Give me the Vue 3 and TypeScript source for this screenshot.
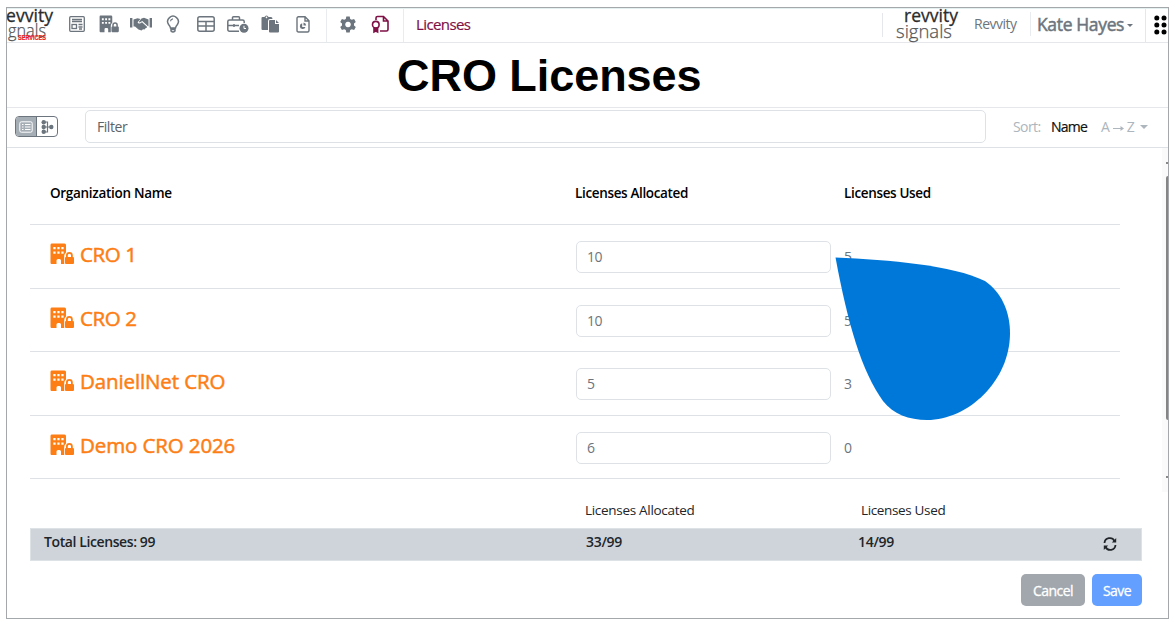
<script setup lang="ts">
import { ref } from 'vue'

interface Org {
  name: string
  allocated: number
  used: number
  cls: string
}

const orgs = ref<Org[]>([
  { name: 'CRO 1', allocated: 10, used: 5, cls: 'n1' },
  { name: 'CRO 2', allocated: 10, used: 5, cls: 'n1' },
  { name: 'DaniellNet CRO', allocated: 5, used: 3, cls: 'n2' },
  { name: 'Demo CRO 2026', allocated: 6, used: 0, cls: 'n2' },
])
</script>

<template>
  <div class="page">
    <svg class="defs" width="0" height="0">
      <defs>
        <symbol id="building" viewBox="0 0 24 22">
          <path fill-rule="evenodd" d="M1.5 0.5H14.5Q16 0.5 16 2V9.5Q14.3 10.8 14.2 13V21H11V17.5Q11 16 9.5 16H8Q6.500 16 6.500 17.500V21H1.500Q.5 21 .5 19.500V2Q.5 .5 1.500 .5ZM3.300 4V6.300H5.600V4ZM7.300 4V6.300H9.600V4ZM11.300 4V6.300H13.600V4ZM3.300 8.500V10.800H5.600V8.500ZM7.300 8.500V10.800H9.600V8.500ZM11.300 8.500V10.800H13.600V8.500Z" />
          <path fill-rule="evenodd" d="M16 14V12.300A3.400 3.400 0 0 1 22.800 12.300V14H23Q24 14 24 15V20Q24 21 23 21H16Q15 21 15 20V15Q15 14 16 14ZM17.800 14H21V12.300A1.600 1.600 0 0 0 17.800 12.300Z" />
        </symbol>
      </defs>
    </svg>
    <div class="frame">
      <header class="top">
        <svg class="logo-left" width="48" height="34" viewBox="0 0 48 34">
          <text x="-1" y="14" class="lg-dark" textLength="47" lengthAdjust="spacingAndGlyphs">evvity</text>
          <text x="1" y="28.500" class="lg-light" textLength="38" lengthAdjust="spacingAndGlyphs">gnals</text>
          <text x="11" y="32" class="lg-red" textLength="28" lengthAdjust="spacingAndGlyphs">SERVICES</text>
        </svg>
        <nav class="icons main-icons">
          <span><svg width="16" height="16" viewBox="0 0 16 16" fill="none" stroke="currentColor" stroke-width="1.300"><rect x=".7" y=".7" width="14.600" height="14.600" rx="1" /><path d="M3 3.500H13M3 5.500H13M9.500 8.500H13.500M9.500 11H13.500M10 13H13" /><rect x="3" y="8.500" width="4.500" height="4" /></svg></span>
          <span><svg width="20" height="18" fill="currentColor"><use href="#building" /></svg></span>
          <span><svg width="22" height="14" viewBox="0 0 22 14" fill="currentColor"><path d="M0 1H2.400V10.500H0ZM19.600 1H22V10.500H19.600Z" /><path d="M3.500 2.500L7.500 1.200 10.500 2 7.600 5.200Q8.200 7.400 10.500 6.200L12 5.200 17 9.700Q17.300 11 15.800 11L14.500 12.500 13 12.200 11.500 13.500 8.500 12.500 5 9.500H3.500ZM11.500 1.500L14 .8 18.500 2.500V9.200H18L12.300 3.900 9.800 5.400 8.800 5.100Z" /></svg></span>
          <span><svg width="14" height="18" viewBox="0 0 14 18" fill="none" stroke="currentColor" stroke-width="1.500"><path d="M4.500 13Q4.400 11.700 2.600 9.500A5.300 5.300 0 1 1 11.400 9.500Q9.600 11.700 9.500 13ZM5 14.500V16Q7 18 9 16V14.500Z" /><path d="M4.500 6.200Q4.700 4.200 7 3.900" stroke-width="1.200" /></svg></span>
          <span><svg width="18" height="16" viewBox="0 0 18 16" fill="none" stroke="currentColor" stroke-width="1.500"><rect x=".8" y=".8" width="16.400" height="14.400" rx="2" /><path d="M1 5.500H17M1 10H17M9 5.500V15" /></svg></span>
          <span><svg width="22" height="17" viewBox="0 0 22 17" fill="none" stroke="currentColor" stroke-width="1.500"><path d="M12 15.200H2.500Q.8 15.200 .8 13.500V5.500Q.8 4 2.500 4H15.500Q17.200 4 17.200 5.500V7M5.500 4V1.800Q5.500.8 6.500.8H11.500Q12.500.8 12.500 1.800V4M1 9.500H12M7 8V11" /><circle cx="17" cy="12.300" r="4.500" fill="currentColor" stroke="none" /><path d="M17 9.800V12.500H19" stroke="#fff" stroke-width="1" /></svg></span>
          <span><svg width="19" height="18" viewBox="0 0 19 18" fill="currentColor"><path fill-rule="evenodd" d="M1.500 2H3.500Q4 .5 5.500.5T7.500 2H10Q11.500 2 11.500 4H9Q7 4 7 6V15H1.500Q.5 15 .5 14V3Q.5 2 1.500 2ZM5.500 1.500A.8.8 0 1 0 5.510 1.500Z" /><path d="M9 5H14V9H18V16.500Q18 17.500 17 17.500H9Q8 17.500 8 16.500V6Q8 5 9 5ZM15 5L18 8H15Z" /></svg></span>
          <span><svg width="14" height="17" viewBox="0 0 14 17" fill="none" stroke="currentColor" stroke-width="1.400"><path d="M2 .8H9L13 4.800V14.500Q13 16 11.500 16H2.500Q1 16 1 14.500V2.200Q1 .8 2.500.8M9 1V5H13" /><path d="M6.200 7.300A2.900 2.900 0 1 0 9.500 11H6.200Z" fill="currentColor" stroke="none" /><path d="M7.500 6.500V9.500H10.200Q10 6.800 7.500 6.500Z" fill="currentColor" stroke="none" /></svg></span>
        </nav>
        <nav class="icons admin-icons">
          <span><svg width="16" height="17" viewBox="0 0 16 17" fill="currentColor"><path fill-rule="evenodd" d="M6.300.5H9.700L10.200 2.900 11.800 3.800 14.100 3 15.800 6 14 7.600V9.400L15.800 11 14.100 14 11.800 13.200 10.200 14.100 9.700 16.500H6.300L5.800 14.100 4.200 13.200 1.900 14 .2 11 2 9.400V7.600L.2 6 1.900 3 4.200 3.800 5.800 2.900ZM8 5.700A2.800 2.800 0 1 0 8.010 5.700Z" /></svg></span>
          <span class="active"><svg width="18" height="19" viewBox="0 0 18 19" fill="none" stroke="currentColor" stroke-width="1.600"><path d="M5 5V3Q5 1.500 6.500 1.500H12.500L17 6V14.500Q17 16 15.500 16H9M12.500 1.500V6H17" /><circle cx="4.800" cy="9.700" r="3.300" /><path d="M3 12.500V17L4.800 16 6.600 17V12.500" fill="currentColor" /></svg></span>
        </nav>
        <span class="crumb">Licenses</span>
        <div class="account">
          <div class="brand">
            <svg width="65" height="35" viewBox="0 0 65 35">
              <text x="8" y="14" class="lg-dark" textLength="54" lengthAdjust="spacingAndGlyphs">revvity</text>
              <text x="0" y="29.500" class="lg-light" textLength="56" lengthAdjust="spacingAndGlyphs">signals</text>
            </svg>
          </div>
          <span class="tenant">Revvity</span>
          <div class="user"><span class="uname">Kate Hayes</span><i class="caret"></i></div>
          <div class="grid-menu">
            <svg width="13" height="20" viewBox="0 0 13 20"><g fill="#000"><circle cx="2.800" cy="3" r="2.500" /><circle cx="10" cy="3" r="2.500" /><circle cx="2.800" cy="10" r="2.500" /><circle cx="10" cy="10" r="2.500" /><circle cx="2.800" cy="17" r="2.500" /><circle cx="10" cy="17" r="2.500" /></g></svg>
          </div>
        </div>
      </header>

      <h1 class="title"><span>CRO Licenses</span></h1>

      <div class="toolbar">
        <div class="toggle">
          <span class="on"><svg width="14" height="12" viewBox="0 0 14 12" fill="none" stroke="#fff"><rect x=".8" y=".8" width="12.400" height="10.400" rx="1.500" /><path d="M3 3.500H4.500M6 3.500H11.500M3 6H4.500M6 6H11.500M3 8.500H4.500M6 8.500H11.500" /></svg></span>
          <span><svg width="13" height="14" viewBox="0 0 13 14" fill="#6c757d"><circle cx="2.700" cy="2.300" r="2.200" /><circle cx="2.700" cy="7" r="2.200" /><circle cx="2.700" cy="11.700" r="2.200" /><circle cx="10.300" cy="7" r="2.200" /><path d="M3 2H6.500V12H3M3 7H10" fill="none" stroke="#6c757d" stroke-width="1.200" /></svg></span>
        </div>
        <div class="filter">Filter</div>
        <span class="sort">Sort:</span>
        <span class="sort-name">Name</span>
        <span class="sort-dir">A <svg width="11" height="7" viewBox="0 0 11 7"><path d="M0 3.500H9" stroke="currentColor" /><path d="M7.500 1L11 3.500 7.500 6Z" fill="currentColor" /></svg> Z</span>
        <i class="caret pale"></i>
      </div>

      <main class="scroll-area">
        <section class="table">
          <div class="row head">
            <span class="h-org">Organization Name</span>
            <span class="h-al">Licenses Allocated</span>
            <span class="h-us">Licenses Used</span>
          </div>
          <div v-for="org in orgs" :key="org.name" class="row">
            <div class="org">
              <svg width="24" height="22" fill="#fd7e14"><use href="#building" /></svg>
              <span :class="org.cls">{{ org.name }}</span>
            </div>
            <div class="input">{{ org.allocated }}</div>
            <span class="used">{{ org.used }}</span>
          </div>
        </section>
        <div class="scrollbar"><i class="tick"></i><b class="thumb"></b><i class="tick low"></i></div>
      </main>

      <footer class="summary">
        <div class="labels"><span></span><span class="l-al">Licenses Allocated</span><span class="l-us">Licenses Used</span></div>
        <div class="total">
          <span class="t1">Total Licenses: 99</span><span class="t2">33/99</span><span class="t3">14/99</span>
          <svg width="14" height="14" viewBox="0 0 14 14" fill="none" stroke="#212529" stroke-width="1.800"><path d="M1.500 6A5.300 5.300 0 0 1 11.500 4M12.500 8A5.300 5.300 0 0 1 2.500 10" /><path d="M13.200 1V5.500H8.800ZM.8 13V8.500H5.200Z" fill="#212529" stroke="none" /></svg>
        </div>
        <div class="actions">
          <button class="cancel"><span>Cancel</span></button>
          <button class="save"><span>Save</span></button>
        </div>
      </footer>
    </div>
    <svg class="drop" width="176" height="164" viewBox="835 257 176 164">
      <path fill="#0078d9" d="M835.500 257.500C890 260 952 265 985 281C1001 292 1010 311 1010 333C1010 381 968 420 927 420C909 420 893 414 883 401C862 372 848 325 835.500 257.500Z" />
    </svg>
  </div>
</template>

<style>
body { margin: 0; background: #fff; overflow: hidden; }
</style>

<style scoped>
* { box-sizing: border-box; }
.page { position: relative; width: 1176px; height: 626px; padding: 7px 0 0 6px; background: #fff; font-family: "Open Sans", "Noto Sans", sans-serif; font-size: 14px; color: #212529; white-space: nowrap; }
.defs { position: absolute; }
.frame { width: 1163px; height: 612px; border: 1px solid #a5a8aa; overflow: hidden; }
.top { display: flex; height: 35px; border-bottom: 1px solid #e5e7ea; color: #6c757d; border-top: 1px solid #e4efef; }
.logo-left { display: block; width: 48px; flex: none; margin-top: -1px; }
.lg-dark { font-family: "Open Sans", sans-serif; font-size: 18px; fill: #2b2b2b; stroke: #2b2b2b; stroke-width: .3px; }
.lg-light { font-family: "Open Sans", sans-serif; font-size: 19px; font-weight: 300; fill: #555; stroke: #555; stroke-width: .25px; }
.lg-red { font-family: "Liberation Sans", sans-serif; font-size: 6.5px; font-weight: 700; fill: #ed1c24; stroke: #ed1c24; stroke-width: .2px; }
.icons { display: flex; flex: none; border-right: 1px solid #e9ecef; }
.icons span { width: 32.3px; height: 30px; display: flex; align-items: center; justify-content: center; }
.main-icons { width: 272px; padding-left: 5.4px; }
.admin-icons { width: 77px; padding-left: 5px; }
.active { color: #7f1146; }
.crumb { margin-left: 12px; line-height: 31px; font-size: 15px; color: #7f1146; letter-spacing: -.6px; -webkit-text-stroke: .2px; }
.account { margin-left: auto; display: flex; height: 34px; }
.brand { width: 79px; flex: none; padding-left: 14px; margin-top: -1px; background: linear-gradient(#e5e7ea, #e5e7ea) 0 5px / 1px 24px no-repeat; }
.tenant { width: 70px; padding-left: 13px; font-size: 14px; letter-spacing: -.5px; border-right: 1px solid #e9ecef; height: 24px; margin-top: 3px; line-height: 24px; }
.user { width: 115px; display: flex; align-items: center; padding-left: 6px; border-right: 1px solid #e5e7ea; height: 33px; }
.uname { font-size: 17.5px; letter-spacing: -.35px; width: 90px; line-height: 24px; margin-top: -3px; -webkit-text-stroke: .5px; }
.caret { border: 3px solid transparent; border-top-color: #6c757d; border-bottom: 0; width: 0; height: 0; }
.pale { border-top-color: #adb5bd; border-width: 4px 4px 0; margin-left: 2px; }
.grid-menu { width: 22px; padding: 6px 0 0 8px; }
.title { height: 65px; margin: 0; border-bottom: 1px solid #e5e7ea; font: 700 45px/66px "Liberation Sans", Arial, sans-serif; color: #000; padding-left: 390px; letter-spacing: -.05px; }
.toolbar { display: flex; align-items: center; height: 40px; border-bottom: 1px solid #dee2e6; padding: 0 0 2px 8px; }
.toggle { display: flex; width: 43px; height: 21px; border: 1px solid #6c757d; border-radius: 4px; overflow: hidden; }
.toggle span { flex: 1; display: flex; align-items: center; justify-content: center; }
.toggle .on { background: #a5adb5; border-right: 1px solid #6c757d; }
.filter { margin-left: 27px; width: 901px; height: 33px; border: 1px solid #dee2e6; border-radius: 5px; padding-left: 11px; line-height: 32px; color: #5b636a; letter-spacing: -.45px; }
.sort { margin-left: 27px; width: 38px; color: #adb5bd; letter-spacing: -.6px; }
.sort-name { width: 50px; color: #111; letter-spacing: -.75px; -webkit-text-stroke: .2px; }
.sort-dir { width: 37px; color: #adb5bd; letter-spacing: -.5px; }
.scroll-area { display: flex; height: 344px; }
.table { width: 1090px; margin-left: 23px; }
.row { display: grid; grid-template-columns: 545px 269px 1fr; height: 63.5px; border-bottom: 1px solid #dee2e6; }
.head { height: 77px; font-weight: 600; color: #000; line-height: 91px; font-size: 13.5px; }
.h-org { padding-left: 20px; letter-spacing: -.3px; }
.h-al, .h-us { letter-spacing: -.35px; }
.org { display: flex; padding: 18px 0 0 20px; color: #fd7e14; font-size: 20.5px; line-height: 22px; -webkit-text-stroke: .5px; }
.org svg { -webkit-text-stroke: 0; }
.org span { margin-left: 6px; }
.n1 { letter-spacing: -.4px; }
.n2 { letter-spacing: -.12px; }
.input { margin: 16px 0 0 1px; width: 255px; height: 32px; border: 1px solid #dee2e6; border-radius: 5px; padding-left: 10px; line-height: 30px; color: #6c757d; letter-spacing: -.5px; }
.used { color: #6c757d; line-height: 63px; }
.scrollbar { margin-left: auto; width: 6px; background: #fafafa; display: flex; flex-direction: column; align-items: flex-end; }
.tick { width: 2px; height: 2px; margin: 14px 0 12px; background: #888; }
.thumb { width: 2px; height: 244px; background: #858585; border-radius: 2px 0 0 2px; }
.low { margin-top: 56px; }
.summary { padding-left: 23px; }
.labels { display: flex; height: 36px; line-height: 37px; font-size: 13.5px; }
.labels span:first-child { width: 555px; }
.l-al { width: 276px; letter-spacing: -.3px; }
.l-us { letter-spacing: -.35px; }
.total { display: flex; width: 1112px; height: 33px; background: #ced4da; border: 1px solid #dde2e6; line-height: 25px; font-weight: 600; font-size: 14px; }
.t1 { width: 555px; padding-left: 13px; letter-spacing: -.4px; }
.t2 { width: 272px; letter-spacing: -.3px; }
.t3 { width: 245px; letter-spacing: -.3px; }
.total svg { margin-top: 8px; }
.actions { display: flex; gap: 7px; width: 1112px; justify-content: flex-end; margin-top: 13px; }
button { border: 0; border-radius: 5px; height: 32px; padding: 0; color: #fff; font: 14px "Open Sans", sans-serif; letter-spacing: -.55px; -webkit-text-stroke: .3px; }
.cancel { width: 64px; background: #a1a7ad; }
.save { width: 50px; background: #629ffe; }
.drop { position: absolute; left: 835px; top: 257px; }
</style>
